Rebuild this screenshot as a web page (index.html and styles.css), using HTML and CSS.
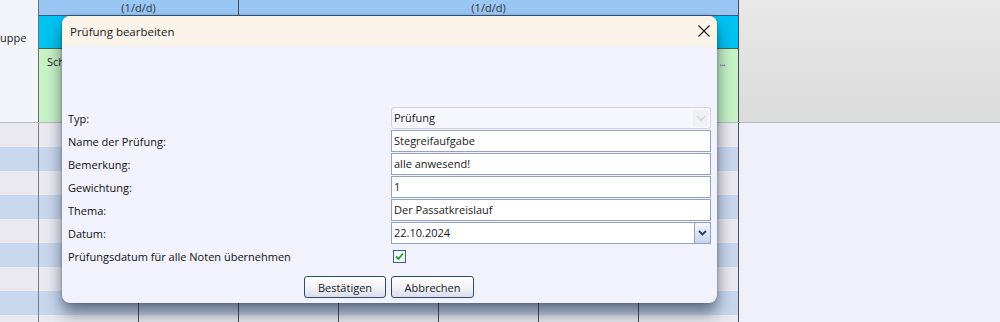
FILE: index.html
```html
<!DOCTYPE html>
<html lang="de">
<head>
<meta charset="utf-8">
<title>Prüfung bearbeiten</title>
<link rel="stylesheet" href="styles.css">
</head>
<body>
<div class="screen">
  <div class="top">
    <div class="left-cell"><span class="grp">uppe</span></div>
    <div class="mid">
      <div class="hdr">
        <div class="hcell w200">(1/d/d)</div>
        <div class="hcell w500">(1/d/d)</div>
      </div>
      <div class="cyan"></div>
      <div class="green"><span class="sch">Sch</span><span class="dots">...</span></div>
    </div>
    <div class="right-top"></div>
  </div>
  <div class="bottom">
    <div class="rows">
      <div class="row g"><i></i><i></i><i></i><i></i><i></i><i></i><i></i><i></i></div>
      <div class="row b"><i></i><i></i><i></i><i></i><i></i><i></i><i></i><i></i></div>
      <div class="row g"><i></i><i></i><i></i><i></i><i></i><i></i><i></i><i></i></div>
      <div class="row b"><i></i><i></i><i></i><i></i><i></i><i></i><i></i><i></i></div>
      <div class="row g"><i></i><i></i><i></i><i></i><i></i><i></i><i></i><i></i></div>
      <div class="row b"><i></i><i></i><i></i><i></i><i></i><i></i><i></i><i></i></div>
      <div class="row g"><i></i><i></i><i></i><i></i><i></i><i></i><i></i><i></i></div>
      <div class="row b"><i></i><i></i><i></i><i></i><i></i><i></i><i></i><i></i></div>
      <div class="row g"><i></i><i></i><i></i><i></i><i></i><i></i><i></i><i></i></div>
    </div>
    <div class="right-bottom"></div>
  </div>

  <div class="dialog">
    <div class="title">
      <span>Prüfung bearbeiten</span>
      <svg class="close" width="12" height="12" viewBox="0 0 12 12"><path d="M0.5 0.5L11.5 11.5M11.5 0.5L0.5 11.5" stroke="#222" stroke-width="1.2" fill="none"/></svg>
    </div>
    <div class="body">
      <div class="form">
        <label>Typ:</label>
        <div class="field select"><span>Prüfung</span><span class="sel-btn"><svg width="10" height="6" viewBox="0 0 10 6"><path d="M1 1L5 5L9 1" stroke="#d4d4dc" stroke-width="1.5" fill="none"/></svg></span></div>
        <label>Name der Prüfung:</label>
        <div class="field">Stegreifaufgabe</div>
        <label>Bemerkung:</label>
        <div class="field">alle anwesend!</div>
        <label>Gewichtung:</label>
        <div class="field">1</div>
        <label>Thema:</label>
        <div class="field">Der Passatkreislauf</div>
        <label>Datum:</label>
        <div class="field date"><span class="dv">22.10.2024</span><span class="dbtn"><svg width="9" height="6" viewBox="0 0 9 6"><path d="M1 1L4.5 4.5L8 1" stroke="#1f3f73" stroke-width="1.8" fill="none"/></svg></span></div>
        <label>Prüfungsdatum für alle Noten übernehmen</label>
        <div class="cbrow"><span class="cb"><svg width="11" height="11" viewBox="0 0 11 11"><path d="M2 5.5L4.5 8L9 2.5" stroke="#22a022" stroke-width="1.8" fill="none"/></svg></span></div>
      </div>
      <div class="buttons">
        <button class="btn b1">Bestätigen</button>
        <button class="btn b2">Abbrechen</button>
      </div>
    </div>
  </div>
</div>
</body>
</html>
```

FILE: styles.css
```css
* { box-sizing: border-box; }
html, body { margin: 0; padding: 0; }
body {
  width: 1000px;
  height: 322px;
  overflow: hidden;
  font-family: "Open Sans", "Noto Sans", sans-serif;
  font-size: 11px;
  color: #1a1a1a;
}
.screen { position: relative; width: 1000px; height: 322px; overflow: hidden; }

.top { display: flex; height: 123px; border-bottom: 1px solid #b8b8c0; }
.left-cell {
  width: 39px;
  background: #f3f3fa;
  border-right: 1px solid #6e6e74;
  padding-top: 30px;
  overflow: hidden;
  font-size: 11px;
}
.grp { display: block; }
.mid { width: 700px; display: flex; flex-direction: column; }
.hdr { display: flex; height: 16px; background: #9ac6f3; border-bottom: 1px solid #3a5a80; }
.hcell { text-align: center; font-size: 11px; line-height: 15px; color: #333; }
.w200 { width: 200px; border-right: 1px solid #4a4a55; }
.w500 { width: 500px; border-right: 1px solid #4a4a55; }
.cyan { height: 33px; background: #00c3f2; border-bottom: 1px solid #3a6a50; border-right: 1px solid #4a4a55; }
.green {
  flex: 1;
  background: #c6f2c6;
  position: relative;
  display: flex;
  justify-content: space-between;
  padding: 5px 8px 0 8px;
  font-size: 11px;
  border-right: 1px solid #4a4a55;
}
.dots { color: #7a5a8a; letter-spacing: -1px; padding-right: 5px; }
.right-top { flex: 1; background: linear-gradient(#e8e8e8, #dbdbdb); }

.bottom { display: flex; height: 199px; }
.rows { width: 739px; display: flex; flex-direction: column; }
.row { display: flex; height: 24px; flex: none; }
.row.g { background: #e9e9ef; }
.row.b { background: #c7d7ee; }
.row i { display: block; width: 100px; border-right: 1px solid #4e4e55; }
.row i:first-child { width: 39px; border-right-color: #7a7a80; }
.right-bottom { flex: 1; background: #f0f0fb; }

.dialog {
  position: absolute;
  left: 62px;
  top: 16px;
  width: 655px;
  height: 287px;
  border-radius: 8px;
  background: #f2f2fd;
  box-shadow: 0 10px 16px rgba(15, 25, 50, 0.55), 0 0 3px rgba(0,0,0,0.3);
  display: flex;
  flex-direction: column;
  overflow: hidden;
}
.title {
  height: 30px;
  flex: none;
  background: #f9f3e9;
  display: flex;
  align-items: center;
  justify-content: space-between;
  padding: 0 7px 0 8px;
  font-size: 11.5px;
  color: #1a1a1a;
}
.body { flex: 1; padding: 61px 6px 0 6px; display: flex; flex-direction: column; }
.form {
  display: grid;
  grid-template-columns: 323px 320px;
  grid-auto-rows: 22px;
  row-gap: 1px;
  align-items: center;
}
.form label { font-size: 11px; white-space: nowrap; color: #111; }
.field {
  height: 22px;
  background: #fff;
  border: 1px solid #8fa4c6;
  padding: 0 0 0 2px;
  line-height: 20px;
  font-size: 11px;
}
.select {
  background: #f6f6fd;
  border-color: #d2d2dc;
  border-radius: 3px;
  display: flex;
  justify-content: space-between;
  align-items: center;
}
.sel-btn {
  width: 15px; height: 17px;
  margin-right: 2px;
  background: #f0f0f4;
  display: flex; align-items: center; justify-content: center;
}
.date { display: flex; padding: 0; }
.dv { flex: 1; padding-left: 2px; }
.dbtn {
  width: 17px;
  margin: -1px -1px -1px 0;
  border: 1px solid #8fa4c6;
  border-radius: 2px;
  background: linear-gradient(#f4f6fb, #c9d3e6);
  display: flex; align-items: center; justify-content: center;
}
.cbrow { display: flex; align-items: center; padding-left: 2px; }
.cb {
  width: 13px; height: 13px;
  border: 1px solid #3e5f8e;
  background: linear-gradient(#eef2f8, #fff);
  display: flex; align-items: center; justify-content: center;
}
.buttons { display: flex; justify-content: center; gap: 5px; margin-top: 9px; padding-right: 1px; }
.btn {
  height: 22px;
  border: 1px solid #2d4a78;
  border-radius: 3px;
  background: linear-gradient(#ffffff, #f2f2f8 50%, #dcdce8);
  font-family: "Open Sans", "Noto Sans", sans-serif;
  font-size: 11px;
  color: #1a1a1a;
  padding: 0;
}
.b1 { width: 82px; }
.b2 { width: 83px; }
```
